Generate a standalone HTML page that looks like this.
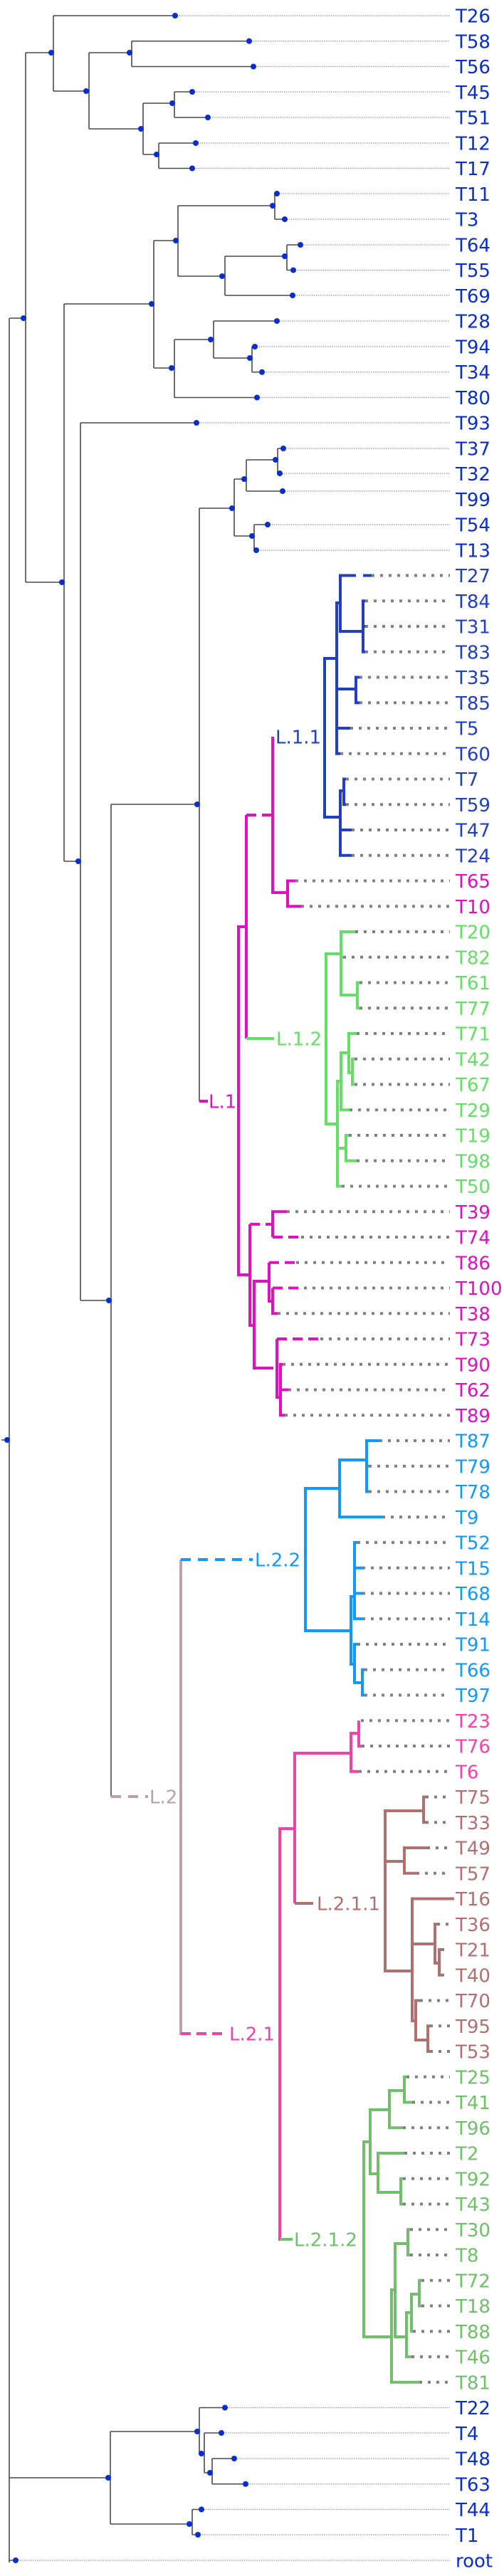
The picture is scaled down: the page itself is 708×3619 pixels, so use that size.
<!DOCTYPE html>
<html><head><meta charset="utf-8"><style>
html,body{margin:0;padding:0;background:#fff;}
svg{display:block;}
text{font-family:"DejaVu Sans","Liberation Sans",sans-serif;font-size:26px;}
</style></head><body>
<svg width="708" height="3619" viewBox="0 0 708 3619" xmlns="http://www.w3.org/2000/svg">
<!-- thin dotted leaf connectors -->
<g stroke="#999" stroke-width="1.2" stroke-dasharray="1.5 1.5" fill="none">
<path d="M246 22H632M350 57.75H632M356 93.5H632M270 129H632M292 165H632M275 201H632M270 236.5H632M389 272H632M400 308H632M422 344H632M412 379.5H632M411 415H632M389 451H632M358 487H632M368 522.75H632M361 558.5H632M276 594H632M398 630H632M393 665H632M397 690H632M376 737H632M360 773H632M316 3382.5H632M311 3418H632M329 3454H632M345 3489.75H632M283 3525.5H632M278 3561H632M22 3597H632"/>
</g>
<!-- thick dotted connectors -->
<g stroke="#808080" stroke-width="4" stroke-dasharray="4 8" fill="none">
<path d="M522 808.5H632M513 844.3H632M513 880H632M513 915.8H632M505 951.5H632M505 987.3H632M492 1023H632M478 1058.8H632M486 1094.5H632M486 1130.3H632M494 1166H632M494 1201.8H632M415 1237.5H632M423 1273.3H632M499 1309H632M482 1344.8H632M505 1380.5H632M505 1416.3H632M501 1452H632M498 1487.8H632M498 1523.5H632M491 1559.3H632M490 1595H632M501 1630.8H632M480 1666.5H632M403 1702.3H632M423 1738H632M416 1773.8H632M427 1809.5H632M390 1845.3H632M450 1881H632M397 1916.8H632M405 1952.5H632M400 1988.3H632M533 2024H632M518 2059.8H632M518 2095.5H632M537 2131.3H632M502 2167H632M509 2202.8H632M509 2238.5H632M509 2274.3H632M502 2310H632M512 2345.8H632M512 2381.5H632M507 2417.3H632M508 2453H632M504 2488.8H632M598 2524.5H632M598 2560.3H632M600 2596H632M585 2631.8H632M614 2703.3H632M620 2739H632M620 2774.8H632M590 2810.5H632M604 2846.3H632M604 2882H632M571 2917.8H632M579 2953.5H632M566 2989.3H632M568 3025H632M566 3060.8H632M566 3096.5H632M576 3132.3H632M576 3168H632M592 3203.8H632M592 3239.5H632M580 3275.3H632M578 3311H632M589 3346.8H632"/>
</g>
<!-- gray tree -->
<g stroke="#4a4a4a" stroke-width="1.6" fill="none">
<path d="M13 447V3600M2 2023H10M13 447H33M36 74V818M36 74H72M75 22V128M75 22H246M75 128H121M125 74V181M125 74H182M185 57.75V93.5M185 57.75H350M185 93.5H356M125 181H198M201 145V217M201 145H242M245 129V165M245 129H270M245 165H292M201 217H220M223 201V236.5M223 201H275M223 236.5H270"/>
<path d="M36 818H87M90 427V1210M90 427H213M216 338V517M216 338H247M250 289V388M250 289H383M386 272V308M386 272H389M386 308H400M250 388H312M316 360V415M316 360H400M403 344V379.5M403 344H422M403 379.5H412M316 415H411M216 517H241M245 477V558.5M245 477H296M300 451V503M300 451H389M300 503H351M354 487V522.75M354 487H358M354 522.75H368M245 558.5H361"/>
<path d="M90 1210H110M113 594V1827M113 594H276M113 1827H153M156 1130V2524M156 1130H277M280 714V1547M280 714H326M329 673V753M329 673H343M346 646V690M346 646H387M390 630V665M390 630H398M390 665H393M346 690H397M329 753H354M357 737V773M357 737H376M357 773H360"/>
<path d="M13 3481H152M155 3416V3546M155 3416H277M280 3382.5V3447M280 3382.5H316M280 3447H283M287 3418V3474M287 3418H311M287 3474H295M298 3454V3489.75M298 3454H329M298 3489.75H345M155 3546H266M270 3525.5V3561M270 3525.5H283M270 3561H278M13 3597H22"/>
</g>
<!-- dots -->
<g fill="#0a2ecc">
<circle cx="10" cy="2023" r="4"/><circle cx="33" cy="447" r="4"/><circle cx="72" cy="74" r="4"/><circle cx="121" cy="128" r="4"/><circle cx="182" cy="74" r="4"/><circle cx="350" cy="57.75" r="4"/><circle cx="356" cy="93.5" r="4"/><circle cx="198" cy="181" r="4"/><circle cx="242" cy="145" r="4"/><circle cx="270" cy="129" r="4"/><circle cx="292" cy="165" r="4"/><circle cx="220" cy="217" r="4"/><circle cx="275" cy="201" r="4"/><circle cx="270" cy="236.5" r="4"/><circle cx="246" cy="22" r="4"/>
<circle cx="87" cy="818" r="4"/><circle cx="213" cy="427" r="4"/><circle cx="247" cy="338" r="4"/><circle cx="383" cy="289" r="4"/><circle cx="389" cy="272" r="4"/><circle cx="400" cy="308" r="4"/><circle cx="312" cy="388" r="4"/><circle cx="400" cy="360" r="4"/><circle cx="422" cy="344" r="4"/><circle cx="412" cy="379.5" r="4"/><circle cx="411" cy="415" r="4"/><circle cx="241" cy="517" r="4"/><circle cx="296" cy="477" r="4"/><circle cx="389" cy="451" r="4"/><circle cx="351" cy="503" r="4"/><circle cx="358" cy="487" r="4"/><circle cx="368" cy="522.75" r="4"/><circle cx="361" cy="558.5" r="4"/>
<circle cx="110" cy="1210" r="4"/><circle cx="276" cy="594" r="4"/><circle cx="153" cy="1827" r="4"/><circle cx="277" cy="1130" r="4"/><circle cx="326" cy="714" r="4"/><circle cx="343" cy="673" r="4"/><circle cx="387" cy="646" r="4"/><circle cx="398" cy="630" r="4"/><circle cx="393" cy="665" r="4"/><circle cx="397" cy="690" r="4"/><circle cx="354" cy="753" r="4"/><circle cx="376" cy="737" r="4"/><circle cx="360" cy="773" r="4"/>
<circle cx="152" cy="3481" r="4"/><circle cx="277" cy="3416" r="4"/><circle cx="316" cy="3382.5" r="4"/><circle cx="283" cy="3447" r="4"/><circle cx="311" cy="3418" r="4"/><circle cx="295" cy="3474" r="4"/><circle cx="329" cy="3454" r="4"/><circle cx="345" cy="3489.75" r="4"/><circle cx="266" cy="3546" r="4"/><circle cx="283" cy="3525.5" r="4"/><circle cx="278" cy="3561" r="4"/><circle cx="22" cy="3597" r="4"/>
</g>
<!-- magenta L.1 -->
<g stroke="#e010c0" stroke-width="4" fill="none">
<path d="M280 1547H292M335 1302V1791M333 1302H346M346 1145V1459M383 1035V1254M381 1254H404M404 1237.5V1273.3M402 1237.5H415M402 1273.3H423M333 1791H351M351 1720V1862M383 1702.3V1738M381 1702.3H403M349 1862H357M357 1800V1922M355 1800H378M378 1773.8V1828M376 1828H383M383 1809.5V1845.3M381 1845.3H390M355 1922H370M389 1881V1963M387 1963H394M394 1916.8V1988.3M392 1916.8H397M392 1952.5H405M392 1988.3H400"/>
<path d="M346 1145H383M351 1720H383M383 1738H423M378 1773.8H416M383 1809.5H427M370 1922H389M389 1881H450" stroke-dasharray="14 8"/>
</g>
<!-- green L.1.2 -->
<g stroke="#66dd66" stroke-width="4" fill="none">
<path d="M346 1459H385M458 1340V1579M456 1340H479M479 1309V1398M477 1309H499M477 1344.8H482M477 1398H502M502 1380.5V1416.3M500 1380.5H505M500 1416.3H505M456 1579H474M474 1519V1666.5M472 1519H479M479 1479V1559.3M477 1479H490M490 1452V1507M488 1452H501M488 1507H495M495 1487.8V1523.5M493 1487.8H498M493 1523.5H498M477 1559.3H491M472 1613H486M486 1595V1630.8M484 1595H490M484 1630.8H501M472 1666.5H480"/>
</g>
<!-- blue L.1.1 -->
<g stroke="#2040c0" stroke-width="4" fill="none">
<path d="M456 925V1148M454 925H473M473 847V1058.8M471 847H478M478 808.5V887M476 808.5H500M510 808.5H522M476 887H510M510 844.3V915.8M508 844.3H513M508 880H513M508 915.8H513M471 968H500M500 951.5V987.3M498 951.5H505M498 987.3H505M471 1023H492M471 1058.8H478M454 1148H478M478 1111V1201.8M476 1111H483M483 1094.5V1130.3M481 1094.5H486M481 1130.3H486M476 1166H494M476 1201.8H494"/>
</g>
<!-- L.2 rosy -->
<g stroke="#c0a0a8" stroke-width="4" fill="none">
<path d="M156 2524H208" stroke-dasharray="14 10"/>
<path d="M254 2191V2859"/>
</g>
<!-- L.2.2 light blue -->
<g stroke="#1199ff" stroke-width="4" fill="none">
<path d="M254 2191H355" stroke-dasharray="14 10"/>
<path d="M429 2091V2291M427 2091H477M477 2051V2131.3M475 2051H515M515 2024V2095.5M513 2024H533M513 2059.8H518M513 2095.5H518M475 2131.3H537M427 2291H493M493 2243V2338M491 2243H498M498 2167V2274.3M496 2167H502M496 2202.8H509M496 2238.5H509M496 2274.3H509M491 2338H498M498 2310V2364M496 2310H502M496 2364H509M509 2345.8V2381.5M507 2345.8H512M507 2381.5H512"/>
</g>
<!-- L.2.1 pink -->
<g stroke="#f540a8" stroke-width="4" fill="none">
<path d="M254 2857H320" stroke-dasharray="14 8"/>
<path d="M393 2569V3148M391 2569H414M414 2463V2674M412 2463H493M493 2435V2488.8M491 2435H504M504 2417.3V2453M502 2453H508M491 2488.8H504"/>
</g>
<!-- L.2.1.1 brown -->
<g stroke="#b07070" stroke-width="4" fill="none">
<path d="M414 2674H440M541 2544V2769M539 2544H595M595 2524.5V2560.3M593 2524.5H598M593 2560.3H598M539 2615H568M568 2596V2631.8M566 2596H600M566 2631.8H585M539 2769H579M579 2667.5V2839M577 2667.5H638M577 2731H611M611 2703.3V2758M609 2703.3H614M609 2758H617M617 2739V2774.8M615 2739H620M615 2774.8H620M577 2839H584M584 2810.5V2866M582 2810.5H590M582 2866H601M601 2846.3V2882M599 2846.3H604M599 2882H604"/>
</g>
<!-- L.2.1.2 green -->
<g stroke="#70bf6a" stroke-width="4" fill="none">
<path d="M393 3146H411M511 3009V3283M509 3009H520M520 2964V3054M518 2964H547M547 2937V2989.3M545 2937H568M568 2917.8V2953.5M566 2917.8H571M566 2953.5H579M545 2989.3H566M518 3054H531M531 3025V3080M529 3025H568M529 3080H563M563 3060.8V3096.5M561 3060.8H566M561 3096.5H566M509 3283H550M550 3217V3346.8M548 3217H555M555 3152V3283M553 3152H573M573 3132.3V3168M571 3132.3H576M571 3168H576M553 3283H571M571 3249V3311M569 3249H578M578 3223V3275.3M576 3223H589M589 3203.8V3239.5M587 3203.8H592M587 3239.5H592M576 3275.3H580M569 3311H578M548 3346.8H589"/>
</g>
<!-- clade labels -->
<text x="387" y="1044.5" fill="#2040c0">L.1.1</text>
<text x="293" y="1556.5" fill="#e010c0">L.1</text>
<text x="388" y="1468.5" fill="#66dd66">L.1.2</text>
<text x="210" y="2533.5" fill="#c0a0a8">L.2</text>
<text x="358" y="2200.5" fill="#1199ff">L.2.2</text>
<text x="322" y="2866.5" fill="#f540a8">L.2.1</text>
<text x="445" y="2683.5" fill="#b07070">L.2.1.1</text>
<text x="413" y="3155.5" fill="#70bf6a">L.2.1.2</text>
<!-- leaf labels -->
<g fill="#0a2ecc">
<text x="640" y="31.5">T26</text><text x="640" y="67.25">T58</text><text x="640" y="103">T56</text><text x="640" y="138.75">T45</text><text x="640" y="174.5">T51</text><text x="640" y="210.25">T12</text><text x="640" y="246">T17</text><text x="640" y="281.75">T11</text><text x="640" y="317.5">T3</text><text x="640" y="353.25">T64</text><text x="640" y="389">T55</text><text x="640" y="424.75">T69</text><text x="640" y="460.5">T28</text><text x="640" y="496.25">T94</text><text x="640" y="532">T34</text><text x="640" y="567.75">T80</text><text x="640" y="603.5">T93</text><text x="640" y="639.25">T37</text><text x="640" y="675">T32</text><text x="640" y="710.75">T99</text><text x="640" y="746.5">T54</text><text x="640" y="782.25">T13</text>
<text x="640" y="3392">T22</text><text x="640" y="3427.75">T4</text><text x="640" y="3463.5">T48</text><text x="640" y="3499.25">T63</text><text x="640" y="3535">T44</text><text x="640" y="3570.75">T1</text><text x="640" y="3606.5">root</text>
</g>
<g fill="#2040c0">
<text x="640" y="818">T27</text><text x="640" y="853.75">T84</text><text x="640" y="889.5">T31</text><text x="640" y="925.25">T83</text><text x="640" y="961">T35</text><text x="640" y="996.75">T85</text><text x="640" y="1032.5">T5</text><text x="640" y="1068.25">T60</text><text x="640" y="1104">T7</text><text x="640" y="1139.75">T59</text><text x="640" y="1175.5">T47</text><text x="640" y="1211.25">T24</text>
</g>
<g fill="#e010c0">
<text x="640" y="1247">T65</text><text x="640" y="1282.75">T10</text>
<text x="640" y="1711.75">T39</text><text x="640" y="1747.5">T74</text><text x="640" y="1783.25">T86</text><text x="640" y="1819">T100</text><text x="640" y="1854.75">T38</text><text x="640" y="1890.5">T73</text><text x="640" y="1926.25">T90</text><text x="640" y="1962">T62</text><text x="640" y="1997.75">T89</text>
</g>
<g fill="#66dd66">
<text x="640" y="1318.5">T20</text><text x="640" y="1354.25">T82</text><text x="640" y="1390">T61</text><text x="640" y="1425.75">T77</text><text x="640" y="1461.5">T71</text><text x="640" y="1497.25">T42</text><text x="640" y="1533">T67</text><text x="640" y="1568.75">T29</text><text x="640" y="1604.5">T19</text><text x="640" y="1640.25">T98</text><text x="640" y="1676">T50</text>
</g>
<g fill="#1199ff">
<text x="640" y="2033.5">T87</text><text x="640" y="2069.25">T79</text><text x="640" y="2105">T78</text><text x="640" y="2140.75">T9</text><text x="640" y="2176.5">T52</text><text x="640" y="2212.25">T15</text><text x="640" y="2248">T68</text><text x="640" y="2283.75">T14</text><text x="640" y="2319.5">T91</text><text x="640" y="2355.25">T66</text><text x="640" y="2391">T97</text>
</g>
<g fill="#f540a8">
<text x="640" y="2426.75">T23</text><text x="640" y="2462.5">T76</text><text x="640" y="2498.25">T6</text>
</g>
<g fill="#b07070">
<text x="640" y="2534">T75</text><text x="640" y="2569.75">T33</text><text x="640" y="2605.5">T49</text><text x="640" y="2641.25">T57</text><text x="640" y="2677">T16</text><text x="640" y="2712.75">T36</text><text x="640" y="2748.5">T21</text><text x="640" y="2784.25">T40</text><text x="640" y="2820">T70</text><text x="640" y="2855.75">T95</text><text x="640" y="2891.5">T53</text>
</g>
<g fill="#70bf6a">
<text x="640" y="2927.25">T25</text><text x="640" y="2963">T41</text><text x="640" y="2998.75">T96</text><text x="640" y="3034.5">T2</text><text x="640" y="3070.25">T92</text><text x="640" y="3106">T43</text><text x="640" y="3141.75">T30</text><text x="640" y="3177.5">T8</text><text x="640" y="3213.25">T72</text><text x="640" y="3249">T18</text><text x="640" y="3284.75">T88</text><text x="640" y="3320.5">T46</text><text x="640" y="3356.25">T81</text>
</g>
</svg>
</body></html>
